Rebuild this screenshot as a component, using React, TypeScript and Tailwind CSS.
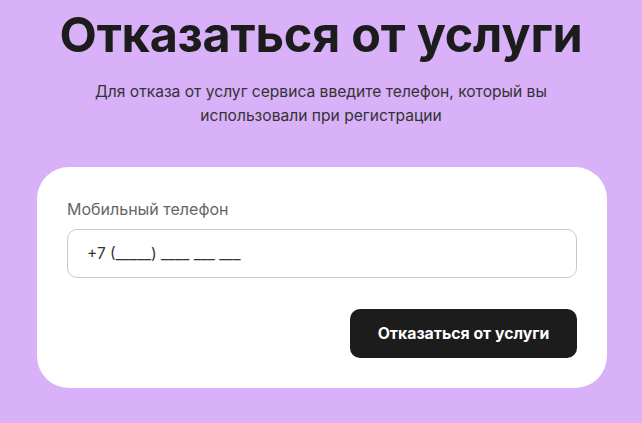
export default function App() {
  return (
    <div
      className="min-h-[423px] w-full bg-[#d8b1f8] flex flex-col items-center pt-[6px]"
      style={{ fontFamily: 'Inter, "Noto Sans", sans-serif' }}
    >
      <h1 className="text-[48.5px] leading-[58px] font-bold text-[#1c1c1c] tracking-[-0.2px]">
        Отказаться от услуги
      </h1>
      <p className="mt-[16px] w-[480px] text-center text-[15.6px] leading-[24px] text-[#333]">
        Для отказа от услуг сервиса введите телефон, который вы использовали при регистрации
      </p>

      <div className="mt-[39px] ml-[2px] w-[570px] bg-white rounded-[32px] px-[30px] pt-[32px] pb-[30px]">
        <label className="block text-[16px] leading-[20px] text-[#666]">Мобильный телефон</label>
        <div className="mt-[10px] h-[49px] rounded-[10px] border border-[#c9c9c9] flex items-center px-[19px] text-[15.5px] text-[#333]">
          +7 (_____) ____ ___ ___
        </div>
        <div className="mt-[31px] flex justify-end">
          <button className="h-[49px] w-[227px] rounded-[10px] bg-[#1c1c1c] text-white text-[15.8px] font-bold">
            Отказаться от услуги
          </button>
        </div>
      </div>
    </div>
  );
}
